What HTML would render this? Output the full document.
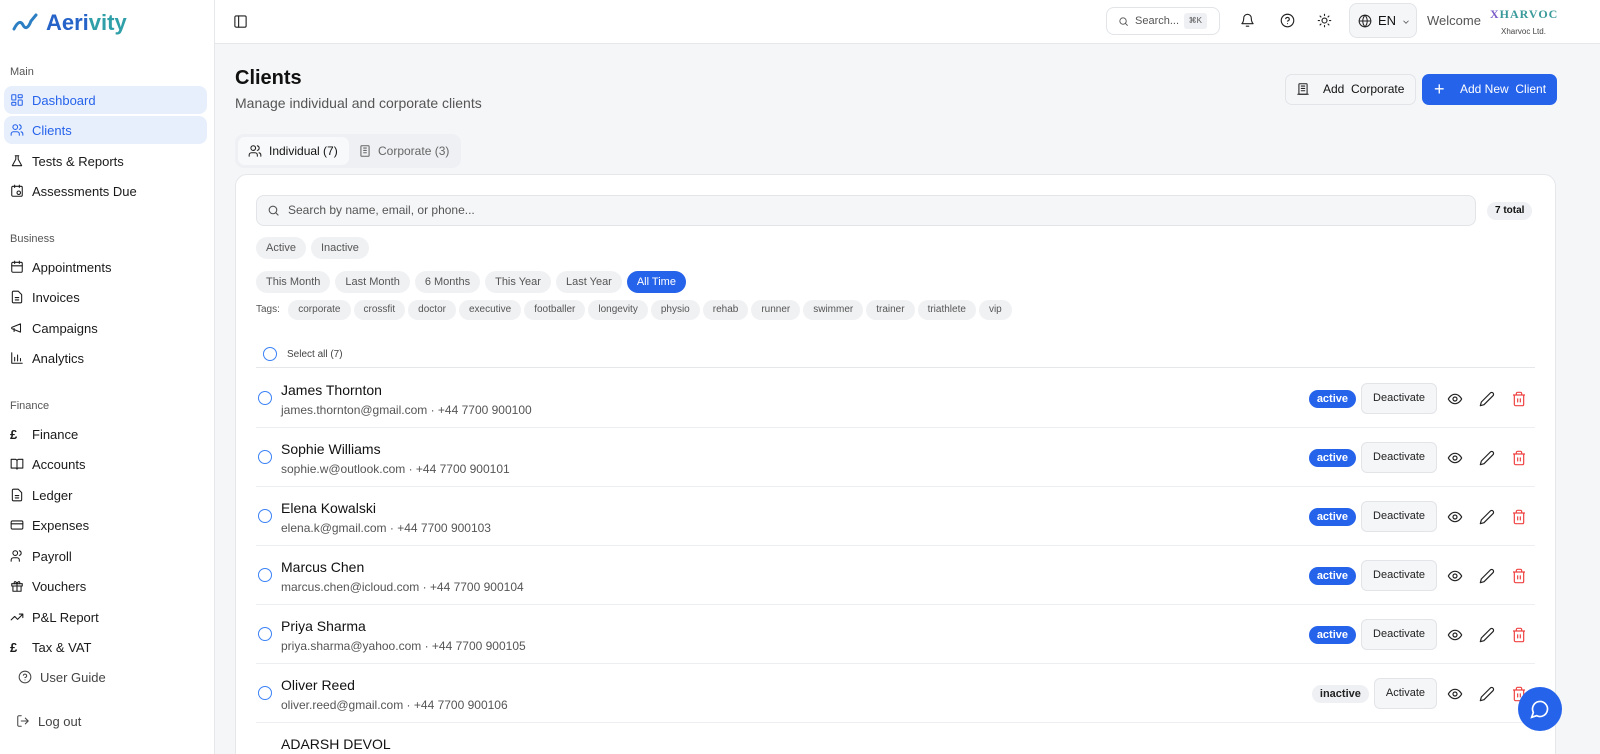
<!DOCTYPE html>
<html style="width:1600px;height:754px;overflow:hidden"><head><meta charset="utf-8"><style>
*{box-sizing:border-box;margin:0;padding:0}
body{width:1600px;height:754px;overflow:hidden;font-family:"Liberation Sans",sans-serif;background:#f5f6f8;color:#111;position:relative}
.sb{position:absolute;left:0;top:0;width:215px;height:754px;background:#fff;border-right:1px solid #e5e7eb}
.logo{position:absolute;left:12px;top:10px;font-size:22px;font-weight:bold;color:#2563c9;display:flex;align-items:center;gap:6px}
.sec{position:absolute;left:10px;font-size:11px;color:#555}
.it{position:absolute;left:4px;width:203px;height:28px;border-radius:8px;display:flex;align-items:center;padding-left:6px;font-size:13px;color:#1a1a1a;gap:8px}
.it.a{background:#e8effc;color:#2563eb}
.it svg{width:14px;height:14px;fill:none;stroke:currentColor;stroke-width:1.8;stroke-linecap:round;stroke-linejoin:round}
.hdr{position:absolute;left:215px;top:0;right:0;height:44px;background:#fff;border-bottom:1px solid #e5e7eb}
.ic{fill:none;stroke:#222;stroke-width:1.8;stroke-linecap:round;stroke-linejoin:round}
.pill{display:inline-block;background:#f0f1f3;border-radius:12px;font-size:11px;color:#555;padding:0 10px;height:22px;line-height:22px;margin-right:5px}
.row{position:absolute;left:20px;right:20px;height:59px;border-bottom:1px solid #eceef1}
.row .c{position:absolute;left:2px;top:22px;width:14px;height:14px;border:1.5px solid #3b82f6;border-radius:50%}
.row .n{position:absolute;left:25px;top:13px;font-size:14px;color:#111}
.row .e{position:absolute;left:25px;top:34px;font-size:12px;color:#555}
.row .r{position:absolute;right:0;top:14px;display:flex;align-items:center;gap:0}
.bd{background:#2563eb;color:#fff;font-size:11px;font-weight:bold;border-radius:10px;padding:0 8px;height:18px;line-height:18px}
.bd.i{background:#eef0f3;color:#222}
.btn{border:1px solid #e2e4e8;background:#f5f6f8;border-radius:6px;height:31px;line-height:29px;font-size:11px;padding:0 11px;margin-left:5px;margin-right:2px;color:#222}
.row svg{width:16px;height:16px;margin:0 8px}
</style></head><body>
<div class="sb">
<div class="logo"><svg width="28" height="20" viewBox="0 0 28 20"><path d="M2 16 C6 8 9 8 11 12 S16 16 19 8 L24 2" fill="none" stroke="#2d7fc4" stroke-width="3" stroke-linecap="round"/></svg><span>Aeri<span style="color:#2fa0a8">vity</span></span></div>
<div class="sec" style="top:66px">Main</div>
<div class="it a" style="top:86px"><svg viewBox="0 0 24 24"><rect x="3" y="3" width="7" height="9" rx="1"/><rect x="14" y="3" width="7" height="5" rx="1"/><rect x="14" y="12" width="7" height="9" rx="1"/><rect x="3" y="16" width="7" height="5" rx="1"/></svg>Dashboard</div>
<div class="it a" style="top:116px"><svg viewBox="0 0 24 24"><circle cx="9" cy="7" r="4"/><path d="M2 21v-2a4 4 0 0 1 4-4h6a4 4 0 0 1 4 4v2M16 3.1a4 4 0 0 1 0 7.8M22 21v-2a4 4 0 0 0-3-3.9"/></svg>Clients</div>
<div class="it" style="top:147px"><svg viewBox="0 0 24 24"><path d="M9 3h6M10 3v6L4 20h16L14 9V3"/></svg>Tests &amp; Reports</div>
<div class="it" style="top:177px"><svg viewBox="0 0 24 24"><rect x="3" y="4" width="18" height="17" rx="2"/><path d="M8 2v4M16 2v4"/><circle cx="15" cy="15" r="3"/></svg>Assessments Due</div>
<div class="sec" style="top:233px">Business</div>
<div class="it" style="top:253px"><svg viewBox="0 0 24 24"><rect x="3" y="4" width="18" height="17" rx="2"/><path d="M8 2v4M16 2v4M3 10h18"/></svg>Appointments</div>
<div class="it" style="top:283px"><svg viewBox="0 0 24 24"><path d="M14 2H6a2 2 0 0 0-2 2v16a2 2 0 0 0 2 2h12a2 2 0 0 0 2-2V8z M9 13h6M9 17h6"/></svg>Invoices</div>
<div class="it" style="top:314px"><svg viewBox="0 0 24 24"><path d="M3 11l15-6v14L3 13z M7 13v5"/></svg>Campaigns</div>
<div class="it" style="top:344px"><svg viewBox="0 0 24 24"><path d="M3 3v18h18M8 17V11M13 17V7M18 17v-4"/></svg>Analytics</div>
<div class="sec" style="top:400px">Finance</div>
<div class="it" style="top:420px"><span style="width:14px;font-weight:bold">£</span>Finance</div>
<div class="it" style="top:450px"><svg viewBox="0 0 24 24"><path d="M2 4h7a3 3 0 0 1 3 3v14a2 2 0 0 0-2-2H2zM22 4h-7a3 3 0 0 0-3 3v14a2 2 0 0 1 2-2h8z"/></svg>Accounts</div>
<div class="it" style="top:481px"><svg viewBox="0 0 24 24"><path d="M14 2H6a2 2 0 0 0-2 2v16a2 2 0 0 0 2 2h12a2 2 0 0 0 2-2V8z M9 13h6M9 17h6"/></svg>Ledger</div>
<div class="it" style="top:511px"><svg viewBox="0 0 24 24"><rect x="2" y="5" width="20" height="14" rx="2"/><path d="M2 10h20"/></svg>Expenses</div>
<div class="it" style="top:542px"><svg viewBox="0 0 24 24"><circle cx="9" cy="7" r="4"/><path d="M2 21v-2a4 4 0 0 1 4-4h6a4 4 0 0 1 4 4v2M16 3.1a4 4 0 0 1 0 7.8"/></svg>Payroll</div>
<div class="it" style="top:572px"><svg viewBox="0 0 24 24"><rect x="3" y="8" width="18" height="4"/><path d="M12 8v13M5 12v9h14v-9M12 8C10 3 6 4 7.5 8M12 8c2-5 6-4 4.5 0"/></svg>Vouchers</div>
<div class="it" style="top:603px"><svg viewBox="0 0 24 24"><path d="M22 7l-9 9-5-5-6 6M16 7h6v6"/></svg>P&amp;L Report</div>
<div class="it" style="top:633px"><span style="width:14px;font-weight:bold">£</span>Tax &amp; VAT</div>
<div class="it" style="top:663px;left:12px;color:#444"><svg viewBox="0 0 24 24"><circle cx="12" cy="12" r="10"/><path d="M9.1 9a3 3 0 0 1 5.8 1c0 2-3 3-3 3M12 17h.01"/></svg>User Guide</div>
<div class="it" style="top:707px;left:10px;color:#444"><svg viewBox="0 0 24 24"><path d="M9 21H5a2 2 0 0 1-2-2V5a2 2 0 0 1 2-2h4M16 17l5-5-5-5M21 12H9"/></svg>Log out</div>
</div>
<div class="hdr">
<svg style="position:absolute;left:18px;top:14px" width="15" height="15" viewBox="0 0 24 24" class="ic"><rect x="3" y="3" width="18" height="18" rx="2"/><path d="M9 3v18"/></svg>
<div style="position:absolute;left:891px;top:7px;width:114px;height:28px;border:1px solid #e2e4e8;border-radius:8px;font-size:11px;color:#555;line-height:26px;padding-left:28px">Search...<span style="position:absolute;right:12px;top:5px;background:#eef0f3;border-radius:3px;font-size:8px;height:16px;line-height:16px;padding:0 5px">⌘K</span><svg style="position:absolute;left:11px;top:8px" width="11" height="11" viewBox="0 0 24 24" fill="none" stroke="#555" stroke-width="2"><circle cx="11" cy="11" r="7"/><path d="M21 21l-5-5"/></svg></div>
<svg style="position:absolute;left:1025px;top:13px" width="15" height="15" viewBox="0 0 24 24" class="ic"><path d="M6 8a6 6 0 0 1 12 0c0 7 3 9 3 9H3s3-2 3-9M10 21h4"/></svg>
<svg style="position:absolute;left:1065px;top:13px" width="15" height="15" viewBox="0 0 24 24" class="ic"><circle cx="12" cy="12" r="10"/><path d="M9.1 9a3 3 0 0 1 5.8 1c0 2-3 3-3 3M12 17h.01"/></svg>
<svg style="position:absolute;left:1102px;top:13px" width="15" height="15" viewBox="0 0 24 24" class="ic"><circle cx="12" cy="12" r="4"/><path d="M12 2v2M12 20v2M4.9 4.9l1.4 1.4M17.7 17.7l1.4 1.4M2 12h2M20 12h2M4.9 19.1l1.4-1.4M17.7 6.3l1.4-1.4"/></svg>
<div style="position:absolute;left:1134px;top:3px;width:68px;height:35px;border:1px solid #e2e4e8;background:#f5f6f8;border-radius:8px;font-size:13px;line-height:33px;padding-left:28px">EN<svg style="position:absolute;left:8px;top:10px" width="14" height="14" viewBox="0 0 24 24" class="ic"><circle cx="12" cy="12" r="10"/><path d="M2 12h20M12 2a15 15 0 0 1 0 20M12 2a15 15 0 0 0 0 20"/></svg><svg style="position:absolute;left:51px;top:13px" width="10" height="10" viewBox="0 0 24 24" fill="none" stroke="#555" stroke-width="2"><path d="M6 9l6 6 6-6"/></svg></div>
<div style="position:absolute;left:1212px;top:13px;font-size:13px;color:#555">Welcome</div>
<div style="position:absolute;left:1275px;top:7px;font-family:'Liberation Serif',serif;font-weight:bold;font-size:12px;color:#7a5bc8;letter-spacing:1px">X<span style="color:#3a9a9a">HARVOC</span></div>
<div style="position:absolute;left:1286px;top:27px;font-size:8px;color:#444">Xharvoc Ltd.</div>
</div>
<div style="position:absolute;left:235px;top:67px;font-size:20px;font-weight:bold">Clients</div>
<div style="position:absolute;left:235px;top:95px;font-size:14px;color:#555">Manage individual and corporate clients</div>
<div style="position:absolute;left:1285px;top:74px;width:131px;height:31px;border:1px solid #e2e4e8;background:#f5f6f8;border-radius:7px;font-size:12px;line-height:29px;padding-left:37px">Add&nbsp; Corporate<svg style="position:absolute;left:10px;top:7px" width="14" height="14" viewBox="0 0 24 24" class="ic"><rect x="5" y="3" width="14" height="18" rx="1"/><path d="M9 7h6M9 11h6M9 15h6M3 21h18"/></svg></div>
<div style="position:absolute;left:1422px;top:74px;width:135px;height:31px;background:#2563eb;border-radius:7px;font-size:12px;color:#fff;line-height:31px;padding-left:38px">Add New&nbsp; Client<span style="position:absolute;left:12px;top:0;font-size:18px">+</span></div>
<div style="position:absolute;left:235px;top:134px;width:226px;height:34px;background:#eef0f3;border-radius:9px"></div>
<div style="position:absolute;left:238px;top:137px;width:111px;height:28px;background:#f8f9fa;border-radius:7px;font-size:12px;line-height:28px;padding-left:31px">Individual (7)<svg style="position:absolute;left:10px;top:7px" width="14" height="14" viewBox="0 0 24 24" class="ic"><circle cx="9" cy="7" r="4"/><path d="M2 21v-2a4 4 0 0 1 4-4h6a4 4 0 0 1 4 4v2M16 3.1a4 4 0 0 1 0 7.8M22 21v-2a4 4 0 0 0-3-3.9"/></svg></div>
<div style="position:absolute;left:378px;top:137px;font-size:12px;line-height:28px;color:#666">Corporate (3)<svg style="position:absolute;left:-20px;top:7px" width="14" height="14" viewBox="0 0 24 24" fill="none" stroke="#666" stroke-width="1.8"><rect x="5" y="3" width="14" height="18" rx="1"/><path d="M9 7h6M9 11h6M9 15h6"/></svg></div>
<div style="position:absolute;left:235px;top:174px;width:1321px;height:600px;background:#fff;border:1px solid #e5e7eb;border-radius:12px">
<div style="position:absolute;left:20px;top:20px;width:1220px;height:31px;background:#f5f6f8;border:1px solid #e2e4e8;border-radius:8px;font-size:12px;color:#555;line-height:29px;padding-left:31px">Search by name, email, or phone...<svg style="position:absolute;left:10px;top:8px" width="13" height="13" viewBox="0 0 24 24" fill="none" stroke="#555" stroke-width="2"><circle cx="11" cy="11" r="7"/><path d="M21 21l-5-5"/></svg></div>
<div style="position:absolute;left:1251px;top:27px;background:#eef0f3;border-radius:10px;font-size:10px;font-weight:bold;padding:0 8px;height:18px;line-height:18px">7 total</div>
<div style="position:absolute;left:20px;top:62px"><span class="pill">Active</span><span class="pill">Inactive</span></div>
<div style="position:absolute;left:20px;top:96px"><span class="pill">This Month</span><span class="pill">Last Month</span><span class="pill">6 Months</span><span class="pill">This Year</span><span class="pill">Last Year</span><span class="pill" style="background:#2563eb;color:#fff">All Time</span></div>
<div style="position:absolute;left:20px;top:124px;font-size:10px;color:#555;line-height:22px">Tags:&nbsp;&nbsp;&nbsp;<span class="pill" style="height:20px;line-height:20px;font-size:10px;margin-right:3px">corporate</span><span class="pill" style="height:20px;line-height:20px;font-size:10px;margin-right:3px">crossfit</span><span class="pill" style="height:20px;line-height:20px;font-size:10px;margin-right:3px">doctor</span><span class="pill" style="height:20px;line-height:20px;font-size:10px;margin-right:3px">executive</span><span class="pill" style="height:20px;line-height:20px;font-size:10px;margin-right:3px">footballer</span><span class="pill" style="height:20px;line-height:20px;font-size:10px;margin-right:3px">longevity</span><span class="pill" style="height:20px;line-height:20px;font-size:10px;margin-right:3px">physio</span><span class="pill" style="height:20px;line-height:20px;font-size:10px;margin-right:3px">rehab</span><span class="pill" style="height:20px;line-height:20px;font-size:10px;margin-right:3px">runner</span><span class="pill" style="height:20px;line-height:20px;font-size:10px;margin-right:3px">swimmer</span><span class="pill" style="height:20px;line-height:20px;font-size:10px;margin-right:3px">trainer</span><span class="pill" style="height:20px;line-height:20px;font-size:10px;margin-right:3px">triathlete</span><span class="pill" style="height:20px;line-height:20px;font-size:10px;margin-right:3px">vip</span></div>
<div style="position:absolute;left:20px;right:20px;top:166px;height:27px;border-bottom:1.5px solid #e5e7eb"><div style="position:absolute;left:7px;top:6px;width:14px;height:14px;border:1.5px solid #3b82f6;border-radius:50%"></div><div style="position:absolute;left:31px;top:8px;font-size:10px;color:#444">Select all (7)</div></div>
<div class="row" style="top:194px"><div class="c"></div><div class="n">James Thornton</div><div class="e">james.thornton@gmail.com · +44 7700 900100</div><div class="r"><span class="bd">active</span><span class="btn">Deactivate</span><svg viewBox="0 0 24 24" class="ic"><path d="M2 12s3.5-7 10-7 10 7 10 7-3.5 7-10 7S2 12 2 12z"/><circle cx="12" cy="12" r="3"/></svg><svg viewBox="0 0 24 24" class="ic"><path d="M17 3a2.8 2.8 0 1 1 4 4L7.5 20.5 2 22l1.5-5.5z"/></svg><svg viewBox="0 0 24 24" fill="none" stroke="#ef4444" stroke-width="1.8"><path d="M3 6h18M19 6v14a2 2 0 0 1-2 2H7a2 2 0 0 1-2-2V6M8 6V4a2 2 0 0 1 2-2h4a2 2 0 0 1 2 2v2M10 11v6M14 11v6"/></svg></div></div>
<div class="row" style="top:253px"><div class="c"></div><div class="n">Sophie Williams</div><div class="e">sophie.w@outlook.com · +44 7700 900101</div><div class="r"><span class="bd">active</span><span class="btn">Deactivate</span><svg viewBox="0 0 24 24" class="ic"><path d="M2 12s3.5-7 10-7 10 7 10 7-3.5 7-10 7S2 12 2 12z"/><circle cx="12" cy="12" r="3"/></svg><svg viewBox="0 0 24 24" class="ic"><path d="M17 3a2.8 2.8 0 1 1 4 4L7.5 20.5 2 22l1.5-5.5z"/></svg><svg viewBox="0 0 24 24" fill="none" stroke="#ef4444" stroke-width="1.8"><path d="M3 6h18M19 6v14a2 2 0 0 1-2 2H7a2 2 0 0 1-2-2V6M8 6V4a2 2 0 0 1 2-2h4a2 2 0 0 1 2 2v2M10 11v6M14 11v6"/></svg></div></div>
<div class="row" style="top:312px"><div class="c"></div><div class="n">Elena Kowalski</div><div class="e">elena.k@gmail.com · +44 7700 900103</div><div class="r"><span class="bd">active</span><span class="btn">Deactivate</span><svg viewBox="0 0 24 24" class="ic"><path d="M2 12s3.5-7 10-7 10 7 10 7-3.5 7-10 7S2 12 2 12z"/><circle cx="12" cy="12" r="3"/></svg><svg viewBox="0 0 24 24" class="ic"><path d="M17 3a2.8 2.8 0 1 1 4 4L7.5 20.5 2 22l1.5-5.5z"/></svg><svg viewBox="0 0 24 24" fill="none" stroke="#ef4444" stroke-width="1.8"><path d="M3 6h18M19 6v14a2 2 0 0 1-2 2H7a2 2 0 0 1-2-2V6M8 6V4a2 2 0 0 1 2-2h4a2 2 0 0 1 2 2v2M10 11v6M14 11v6"/></svg></div></div>
<div class="row" style="top:371px"><div class="c"></div><div class="n">Marcus Chen</div><div class="e">marcus.chen@icloud.com · +44 7700 900104</div><div class="r"><span class="bd">active</span><span class="btn">Deactivate</span><svg viewBox="0 0 24 24" class="ic"><path d="M2 12s3.5-7 10-7 10 7 10 7-3.5 7-10 7S2 12 2 12z"/><circle cx="12" cy="12" r="3"/></svg><svg viewBox="0 0 24 24" class="ic"><path d="M17 3a2.8 2.8 0 1 1 4 4L7.5 20.5 2 22l1.5-5.5z"/></svg><svg viewBox="0 0 24 24" fill="none" stroke="#ef4444" stroke-width="1.8"><path d="M3 6h18M19 6v14a2 2 0 0 1-2 2H7a2 2 0 0 1-2-2V6M8 6V4a2 2 0 0 1 2-2h4a2 2 0 0 1 2 2v2M10 11v6M14 11v6"/></svg></div></div>
<div class="row" style="top:430px"><div class="c"></div><div class="n">Priya Sharma</div><div class="e">priya.sharma@yahoo.com · +44 7700 900105</div><div class="r"><span class="bd">active</span><span class="btn">Deactivate</span><svg viewBox="0 0 24 24" class="ic"><path d="M2 12s3.5-7 10-7 10 7 10 7-3.5 7-10 7S2 12 2 12z"/><circle cx="12" cy="12" r="3"/></svg><svg viewBox="0 0 24 24" class="ic"><path d="M17 3a2.8 2.8 0 1 1 4 4L7.5 20.5 2 22l1.5-5.5z"/></svg><svg viewBox="0 0 24 24" fill="none" stroke="#ef4444" stroke-width="1.8"><path d="M3 6h18M19 6v14a2 2 0 0 1-2 2H7a2 2 0 0 1-2-2V6M8 6V4a2 2 0 0 1 2-2h4a2 2 0 0 1 2 2v2M10 11v6M14 11v6"/></svg></div></div>
<div class="row" style="top:489px"><div class="c"></div><div class="n">Oliver Reed</div><div class="e">oliver.reed@gmail.com · +44 7700 900106</div><div class="r"><span class="bd i">inactive</span><span class="btn">Activate</span><svg viewBox="0 0 24 24" class="ic"><path d="M2 12s3.5-7 10-7 10 7 10 7-3.5 7-10 7S2 12 2 12z"/><circle cx="12" cy="12" r="3"/></svg><svg viewBox="0 0 24 24" class="ic"><path d="M17 3a2.8 2.8 0 1 1 4 4L7.5 20.5 2 22l1.5-5.5z"/></svg><svg viewBox="0 0 24 24" fill="none" stroke="#ef4444" stroke-width="1.8"><path d="M3 6h18M19 6v14a2 2 0 0 1-2 2H7a2 2 0 0 1-2-2V6M8 6V4a2 2 0 0 1 2-2h4a2 2 0 0 1 2 2v2M10 11v6M14 11v6"/></svg></div></div>
<div class="row" style="top:548px"><div class="n">ADARSH DEVOL</div></div>
</div>
<div style="position:absolute;left:1518px;top:687px;width:44px;height:44px;border-radius:50%;background:#2563eb"><svg style="position:absolute;left:12px;top:12px" width="20" height="20" viewBox="0 0 24 24" fill="none" stroke="#fff" stroke-width="2"><path d="M7.9 20A9 9 0 1 0 4 16.1L2 22z"/></svg></div>
</body></html>
